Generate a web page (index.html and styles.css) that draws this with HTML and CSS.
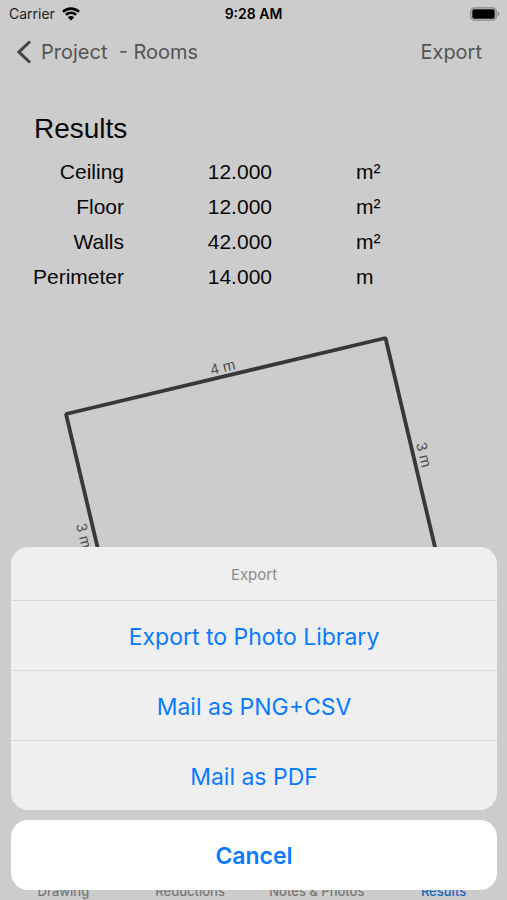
FILE: index.html
```html
<!DOCTYPE html>
<html lang="en">
<head>
<meta charset="utf-8">
<meta name="viewport" content="width=device-width, initial-scale=1">
<title>Project - Rooms</title>
<link rel="stylesheet" href="styles.css">
</head>
<body>
<div class="screen">
  <div class="status">
    <div class="carrier">
      <span>Carrier</span>
      <svg class="wifi" viewBox="0 0 18 14" aria-hidden="true">
        <path d="M1 4.900a11.400 11.400 0 0 1 16 0M3.900 7.900a7.300 7.300 0 0 1 10.200 0" fill="none" stroke="#000" stroke-width="2.600"/>
        <path d="M9 13.400 5.800 10.200a4.600 4.600 0 0 1 6.400 0z"/>
      </svg>
    </div>
    <div class="clock">9:28 AM</div>
    <svg class="battery" viewBox="0 0 30 14" aria-hidden="true">
      <rect x=".8" y=".8" width="25.4" height="12.4" rx="3.6" fill="none" stroke="#858585" stroke-width="1.3"/>
      <rect x="2.3" y="2.3" width="22.4" height="9.4" rx="1.6"/>
      <path d="M27.6 4.8c1 .3 1.8 1.1 1.8 2.2s-.8 1.9-1.8 2.2z" fill="#858585"/>
    </svg>
  </div>

  <header class="nav">
    <button class="back" type="button">
      <svg class="chevron" viewBox="0 0 14 24" aria-hidden="true">
        <path d="M13 1.500 2 12l11 10.500" fill="none" stroke="#444" stroke-width="3"/>
      </svg>
      <span>Project&nbsp; - Rooms</span>
    </button>
    <button class="export" type="button">Export</button>
  </header>

  <main class="content">
    <h1 class="title">Results</h1>
    <table class="results">
      <tbody>
        <tr><th scope="row">Ceiling</th><td class="value">12.000</td><td>m²</td></tr>
        <tr><th scope="row">Floor</th><td class="value">12.000</td><td>m²</td></tr>
        <tr><th scope="row">Walls</th><td class="value">42.000</td><td>m²</td></tr>
        <tr><th scope="row">Perimeter</th><td class="value">14.000</td><td>m</td></tr>
      </tbody>
    </table>
    <svg class="plan" viewBox="0 0 507 480" role="img" aria-label="Room plan">
      <path d="M66 94 385.500 18 443 261 123.500 337z" fill="none" stroke="#383838" stroke-width="3.800" stroke-linejoin="bevel"/>
      <g class="dims">
        <text transform="translate(224 52) rotate(-13.400)">4 m</text>
        <text transform="translate(419 136) rotate(76.600)">3 m</text>
        <text transform="translate(79 217) rotate(76.600)">3 m</text>
      </g>
    </svg>
  </main>

  <nav class="tabs">
    <a href="#drawing">Drawing</a>
    <a href="#reductions">Reductions</a>
    <a href="#notes">Notes &amp; Photos</a>
    <a class="active" href="#results">Results</a>
  </nav>

  <div class="sheet" role="dialog" aria-labelledby="sheet-title">
    <div class="actions">
      <h2 class="sheet-title" id="sheet-title">Export</h2>
      <button class="action" type="button">Export to Photo Library</button>
      <button class="action" type="button">Mail as PNG+CSV</button>
      <button class="action" type="button">Mail as PDF</button>
    </div>
    <button class="cancel" type="button">Cancel</button>
  </div>
</div>
</body>
</html>
```
FILE: styles.css
```css
* {
  box-sizing: border-box;
}

body {
  margin: 0;
  background: #ccc;
  font-family: Inter, "Liberation Sans", sans-serif;
}

button {
  margin: 0;
  padding: 0;
  border: 0;
  background: none;
  color: inherit;
  font: inherit;
}

svg {
  display: block;
}

.screen {
  position: relative;
  display: flex;
  flex-direction: column;
  height: 100vh;
  overflow: hidden;
}

.status {
  display: grid;
  grid-template-columns: 1fr auto 1fr;
  align-items: center;
  height: 27px;
  padding: 0 7px;
  font-size: 14px;
  color: #222;
}

.carrier {
  display: flex;
  align-items: center;
  gap: 7px;
  padding-left: 2px;
}

.wifi {
  width: 18px;
  height: 14px;
}

.clock {
  color: #000;
  font-weight: 600;
}

.battery {
  width: 30px;
  height: 14px;
  justify-self: end;
}

.nav {
  display: flex;
  align-items: center;
  justify-content: space-between;
  height: 50px;
  padding: 0 25px 0 17px;
  font-size: 20px;
  color: #555;
}

.back {
  display: flex;
  align-items: center;
  gap: 10px;
}

.chevron {
  width: 14px;
  height: 24px;
}

.content {
  flex: 1;
  min-height: 0;
  overflow: hidden;
  font-family: "Liberation Sans", Arial, sans-serif;
  color: #080808;
}

.title {
  margin: 35px 0 8px 34px;
  font-size: 28px;
  line-height: 34px;
  font-weight: 400;
}

.results {
  width: 80%;
  border-collapse: collapse;
  table-layout: fixed;
  font-size: 21px;
  line-height: 35px;
}

.results th,
.results td {
  padding: 0;
  font-weight: 400;
  text-align: left;
}

.results th {
  width: 124px;
  text-align: right;
}

.results .value {
  width: 148px;
  text-align: right;
}

.results td:last-child {
  padding-left: 84px;
}

.plan {
  width: 100%;
  margin-top: 26px;
}

.dims {
  fill: #505050;
  font-size: 15px;
  text-anchor: middle;
}

.tabs {
  display: grid;
  grid-template-columns: repeat(4, 1fr);
  font-size: 13px;
  line-height: 18px;
  font-weight: 500;
  text-align: center;
}

.tabs a {
  color: #777;
  text-decoration: none;
  white-space: nowrap;
}

.tabs .active {
  color: #1466bd;
}

.sheet {
  position: absolute;
  right: 10px;
  bottom: 10px;
  left: 11px;
  display: flex;
  flex-direction: column;
  gap: 10px;
  color: #0a7aff;
  font-size: 23px;
}

.actions {
  display: flex;
  flex-direction: column;
  overflow: hidden;
  border-radius: 17px;
  background: #efefef;
}

.sheet-title {
  margin: 0;
  padding-top: 3px;
  color: #8c8c8c;
  font-size: 15px;
  line-height: 50px;
  font-weight: 400;
  text-align: center;
}

.action,
.cancel {
  height: 70px;
  padding-top: 2px;
}

.action {
  border-top: 1px solid #d9d9d9;
}

.cancel {
  border-radius: 17px;
  background: #fff;
  font-weight: 600;
}
```
